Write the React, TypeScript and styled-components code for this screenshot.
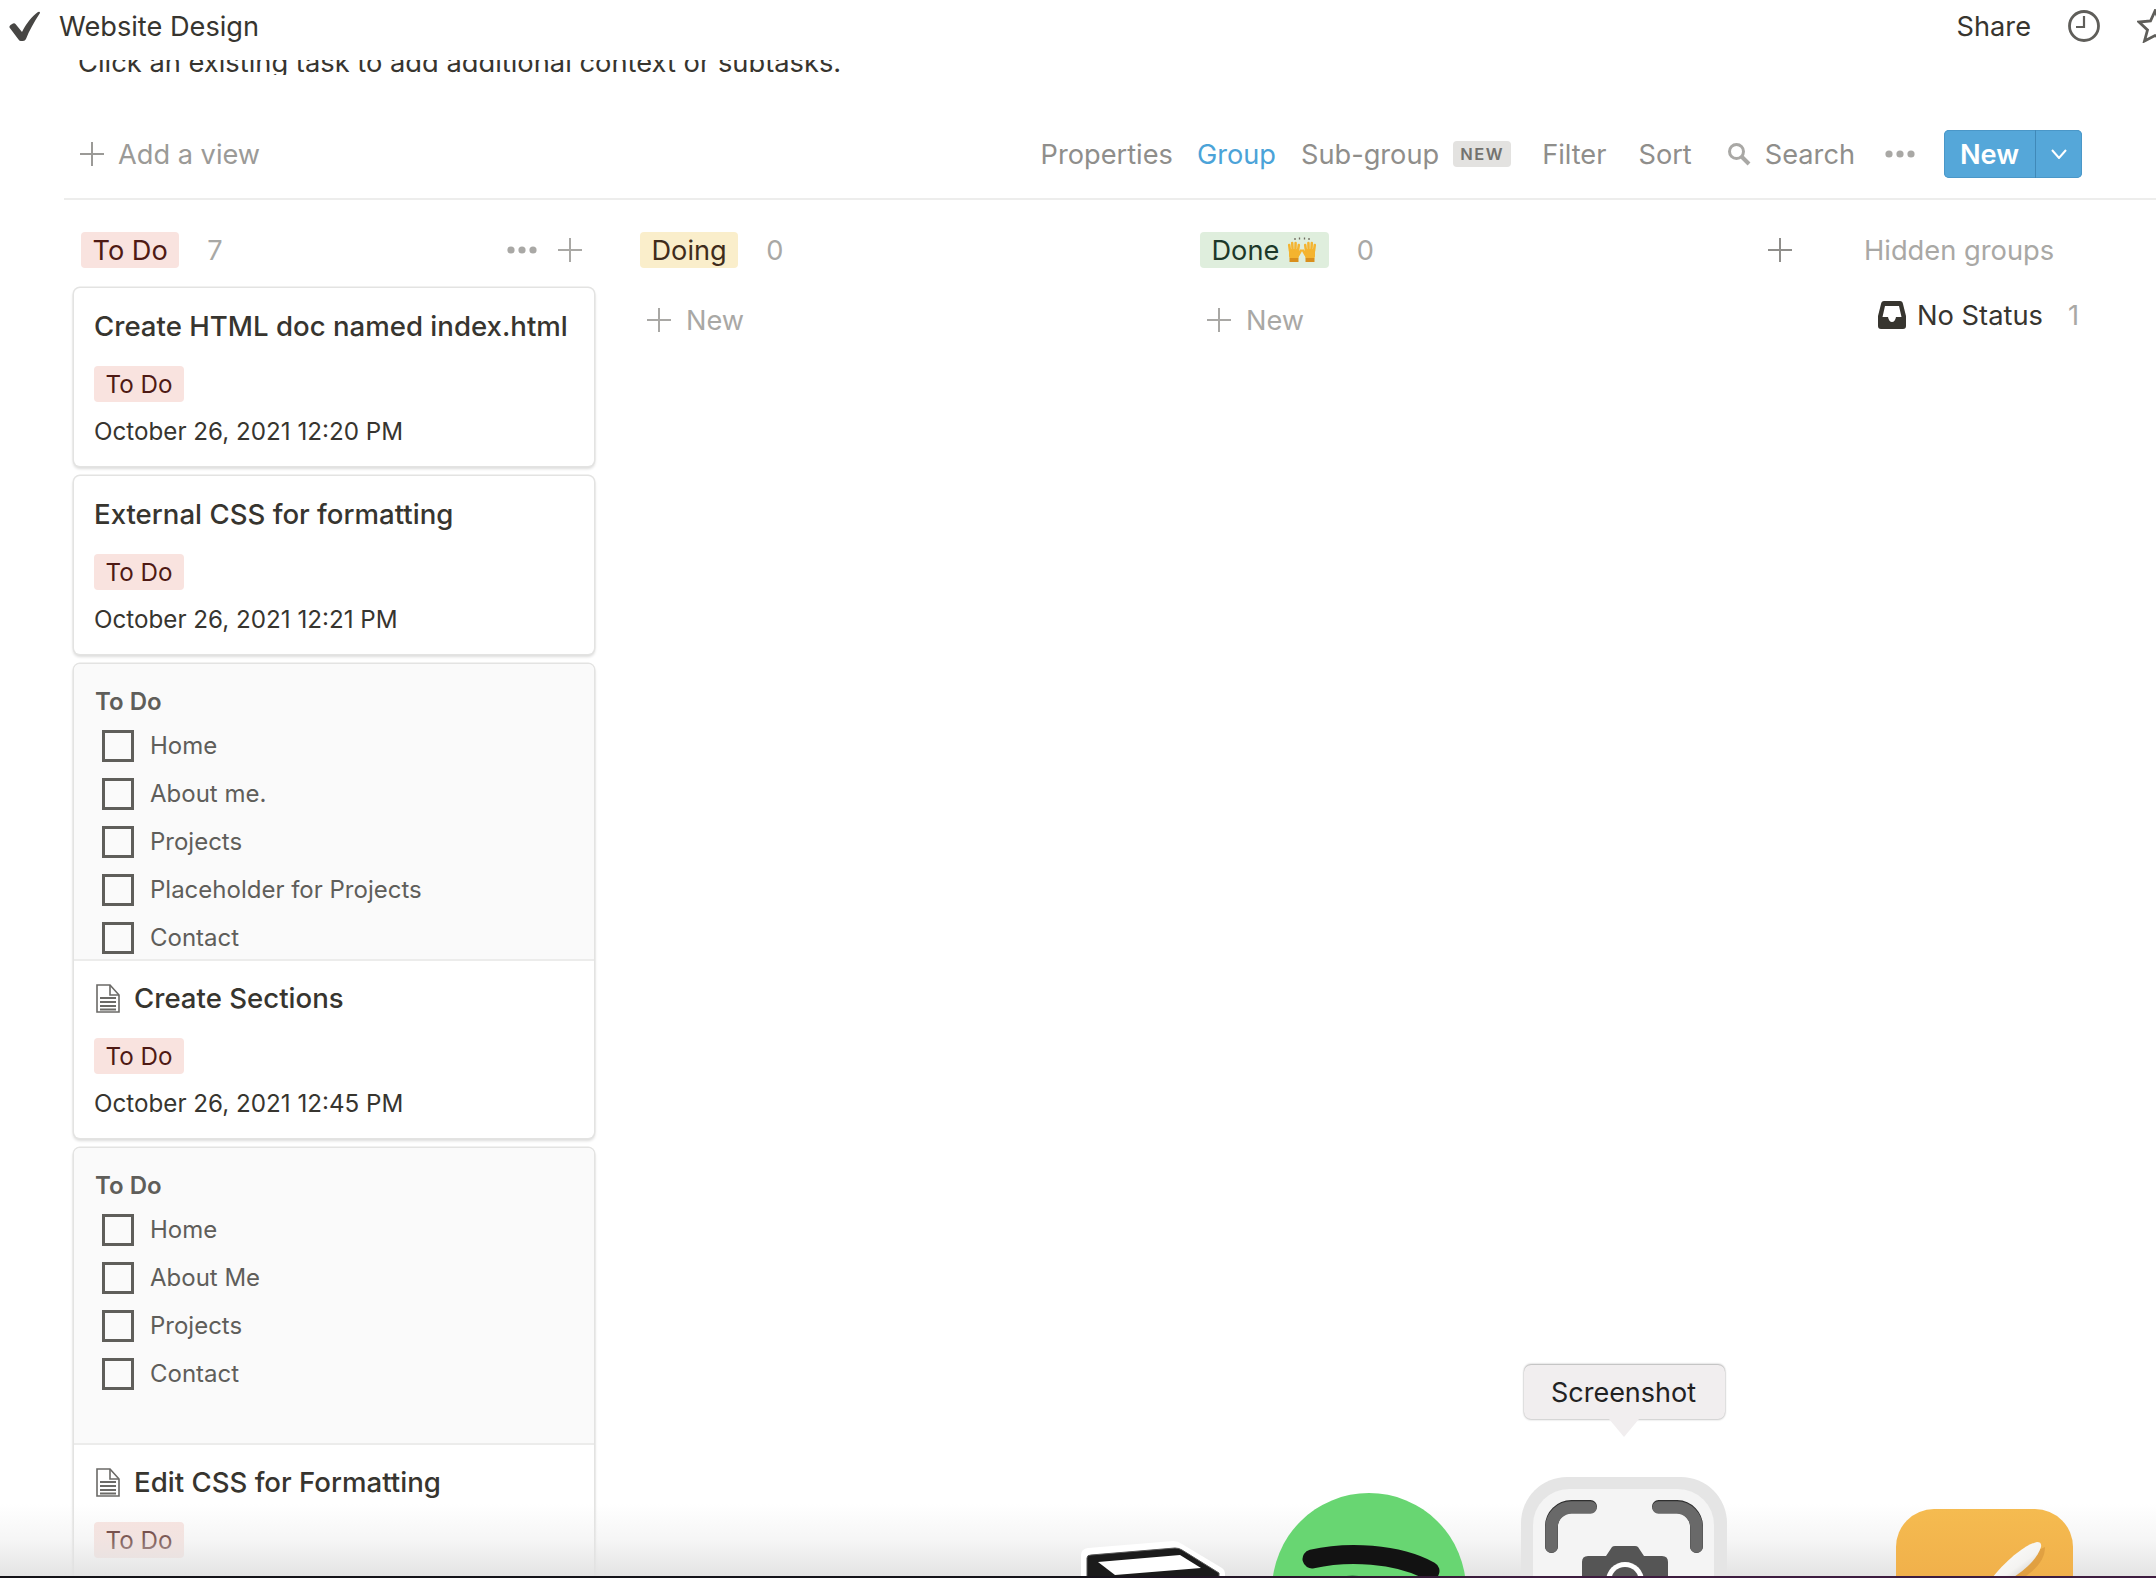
import React from "react";
import styled, { createGlobalStyle } from "styled-components";

const GlobalStyle = createGlobalStyle`
  html, body {
    margin: 0;
    padding: 0;
    background: #fff;
  }
  body {
    font-family: Inter, "Liberation Sans", sans-serif;
    color: #37352f;
  }
`;

const Page = styled.div`
  position: relative;
  width: 2156px;
  height: 1578px;
  overflow: hidden;
  background: #fff;
`;

const TopBar = styled.header`
  height: 60px;
  padding: 0 0 8px 9px;
  box-sizing: border-box;
  display: flex;
  align-items: center;
  gap: 18px;
  font-size: 27.2px;
`;

const PageTitle = styled.span`
  color: #37352f;
`;

const TopActions = styled.div`
  margin-left: auto;
  margin-right: -17px;
  display: flex;
  align-items: center;
  gap: 37px;
`;

const Description = styled.div`
  height: 15px;
  padding-left: 78px;
  display: flex;
  align-items: flex-end;
  overflow: hidden;
  font-size: 27.3px;
  line-height: 32px;
  color: #37352f;
  white-space: nowrap;
  & > span {
    display: block;
    margin-bottom: -4px;
  }
`;

const Toolbar = styled.div`
  margin: 35px 0 0 64px;
  height: 90px;
  padding: 0 74px 0 16px;
  box-sizing: border-box;
  border-bottom: 2px solid #ededec;
  display: flex;
  align-items: center;
  font-size: 27.2px;
  color: #8f8e8b;
`;

const AddView = styled.div`
  display: flex;
  align-items: center;
  gap: 14px;
  margin-right: auto;
  color: #9b9a97;
`;

const ToolItem = styled.span<{ $gap?: number; $active?: boolean }>`
  margin-left: ${(p) => p.$gap ?? 0}px;
  color: ${(p) => (p.$active ? "#4ba3d8" : "#8f8e8b")};
  display: inline-flex;
  align-items: center;
`;

const NewBadge = styled.span`
  margin-left: 14px;
  width: 58px;
  height: 26px;
  border-radius: 4px;
  background: #e3e2e0;
  color: #73726e;
  font-size: 16.5px;
  font-weight: 600;
  letter-spacing: 1.4px;
  display: inline-flex;
  align-items: center;
  justify-content: center;
`;

const NewButton = styled.div`
  margin-left: 29px;
  width: 138px;
  height: 48px;
  border-radius: 5px;
  background: #55a7d9;
  box-shadow: inset 0 0 0 1px #4a97c8;
  color: #fff;
  display: flex;
  align-items: stretch;
`;

const NewLabel = styled.span`
  width: 91px;
  display: flex;
  align-items: center;
  justify-content: center;
  font-weight: 600;
  border-right: 1px solid #4089b8;
`;

const NewArrow = styled.span`
  flex: 1;
  display: flex;
  align-items: center;
  justify-content: center;
`;

const Board = styled.main`
  margin-top: 32px;
  padding-left: 73px;
  display: flex;
  align-items: flex-start;
  gap: 37px;
`;

const Column = styled.section<{ $width: number }>`
  width: ${(p) => p.$width}px;
  flex: none;
`;

const ColumnHeader = styled.div`
  height: 36px;
  padding: 0 13px 0 8px;
  display: flex;
  align-items: center;
  font-size: 27.2px;
`;

const Tag = styled.span<{ $kind: "todo" | "doing" | "done" }>`
  height: 36px;
  padding: 0 11.5px;
  border-radius: 4px;
  display: inline-flex;
  align-items: center;
  gap: 8px;
  white-space: nowrap;
  background: ${(p) =>
    p.$kind === "todo" ? "#f9e3df" : p.$kind === "doing" ? "#faeecb" : "#dfeedd"};
  color: ${(p) =>
    p.$kind === "todo" ? "#4f1a14" : p.$kind === "doing" ? "#402c1b" : "#1c3829"};
`;

const CardTag = styled(Tag)`
  font-size: 24.2px;
`;

const Count = styled.span`
  margin-left: 28px;
  color: #a9a8a5;
`;

const HeaderTools = styled.div`
  margin-left: auto;
  display: flex;
  align-items: center;
  gap: 21px;
`;

const CardList = styled.div`
  margin-top: 20px;
  padding: 0 1px;
  display: flex;
  flex-direction: column;
  gap: 10px;
`;

const Card = styled.article`
  border-radius: 6px;
  background: #fff;
  overflow: hidden;
  box-shadow: 0 0 0 1.5px #e3e3e2, 0 2px 3px 1px #dcdcdb;
`;

const Cover = styled.div`
  height: 297px;
  padding: 21px 0 0 21px;
  box-sizing: border-box;
  background: #fafafa;
  border-bottom: 2px solid #ececeb;
  overflow: hidden;
  color: #5f5e5a;
  font-size: 24px;
`;

const CoverHeading = styled.div`
  line-height: 34px;
  font-weight: 600;
  margin-bottom: 3px;
`;

const TodoRow = styled.div`
  height: 48px;
  padding-left: 7px;
  display: flex;
  align-items: center;
  gap: 16px;
`;

const TodoText = styled.span`
  margin-bottom: 2px;
`;

const Checkbox = styled.span`
  width: 32px;
  height: 32px;
  box-sizing: border-box;
  border: 3px solid #5f5e5a;
`;

const CardBody = styled.div<{ $covered?: boolean }>`
  min-height: 177px;
  box-sizing: border-box;
  padding: ${(p) => (p.$covered ? "19px" : "20px")} 20px 17px;
`;

const CardTitle = styled.div<{ $covered?: boolean }>`
  height: 36px;
  padding-left: ${(p) => (p.$covered ? 2 : 0)}px;
  display: flex;
  align-items: center;
  gap: 14px;
  font-size: 27.6px;
  font-weight: 500;
  white-space: nowrap;
  margin-bottom: 22px;
`;

const CardDate = styled.div`
  margin-top: 13px;
  line-height: 34px;
  font-size: 24.2px;
  color: #37352f;
`;

const NewRow = styled.div`
  margin-top: 34px;
  padding-left: 15px;
  height: 36px;
  display: flex;
  align-items: center;
  gap: 15px;
  font-size: 27.2px;
  color: #a9a8a5;
`;

const HiddenColumn = styled.aside`
  margin-left: 22px;
  font-size: 27.3px;
`;

const HiddenTitle = styled.div`
  height: 36px;
  line-height: 37px;
  color: #a9a8a5;
  white-space: nowrap;
`;

const HiddenRow = styled.div`
  margin-top: 29px;
  height: 36px;
  padding-left: 14px;
  display: flex;
  align-items: center;
  gap: 11px;
  white-space: nowrap;
`;

const HiddenCount = styled.span`
  margin-left: 14px;
  color: #a9a8a5;
`;

const DockLayer = styled.div`
  position: absolute;
  inset: 0;
  pointer-events: none;
`;

const DockFade = styled.div`
  position: absolute;
  left: 0;
  right: 0;
  bottom: 2px;
  height: 72px;
  background: linear-gradient(
    rgba(228, 228, 228, 0),
    rgba(228, 228, 228, 0.35) 50%,
    rgba(226, 226, 226, 0.95)
  );
`;

const DockBar = styled.div`
  position: absolute;
  left: 0;
  right: 0;
  bottom: 0;
  height: 2px;
  background: linear-gradient(90deg, #131217 0, #15131a 50%, #3d1c3f 70%, #3d1c3f 100%);
`;

const DockIcon = styled.svg<{ $left: number; $top: number }>`
  position: absolute;
  left: ${(p) => p.$left}px;
  top: ${(p) => p.$top}px;
`;

const Tooltip = styled.div`
  position: absolute;
  left: 1524px;
  top: 1365px;
  width: 201px;
  height: 54px;
  padding-right: 2px;
  box-sizing: border-box;
  border-radius: 7px;
  background: #f1eeef;
  box-shadow: 0 -1px 2px rgba(0, 0, 0, 0.3), 0 1px 2px rgba(0, 0, 0, 0.2);
  color: #222;
  font-size: 27px;
  display: flex;
  align-items: center;
  justify-content: center;
  &::after {
    content: "";
    position: absolute;
    left: 85px;
    top: 54px;
    border-left: 15px solid transparent;
    border-right: 15px solid transparent;
    border-top: 18px solid #f1eeef;
  }
`;

const PlusIcon = ({ color = "#a9a8a5" }: { color?: string }) => (
  <svg width="24" height="24" viewBox="0 0 24 24">
    <path d="M12 0V24M0 12H24" stroke={color} strokeWidth="2" fill="none" />
  </svg>
);

const DotsIcon = ({ color = "#a9a8a5" }: { color?: string }) => (
  <svg width="30" height="8" viewBox="0 0 30 8">
    <circle cx="4" cy="4" r="3.6" fill={color} />
    <circle cx="15" cy="4" r="3.6" fill={color} />
    <circle cx="26" cy="4" r="3.6" fill={color} />
  </svg>
);

const DocIcon = () => (
  <svg width="24" height="29" viewBox="0 0 24 29" fill="none" stroke="#6b6a67">
    <path d="M1 1H14L23 11V28H1Z" strokeWidth="1.6" />
    <path d="M14 1V11H23" strokeWidth="1.6" />
    <path d="M4 14H20M4 18H20M4 22H20M4 25.5H20" strokeWidth="1.8" />
  </svg>
);

const Hand = () => (
  <>
    <rect x="2" y="12" width="10" height="10" rx="3" fill="#f4b42f" />
    <path
      d="M3 14L2.2 8M5.6 13L5.2 6M8.4 13L8.6 6M11 14L11.8 8M11.5 18L14 13.5"
      stroke="#f4b42f"
      strokeWidth="2.5"
      strokeLinecap="round"
      fill="none"
    />
    <rect x="2.5" y="21" width="9" height="4" fill="#d98f1c" />
  </>
);

const RaisedHands = () => (
  <svg width="30" height="26" viewBox="0 0 30 26">
    <Hand />
    <g transform="translate(30 0) scale(-1 1)">
      <Hand />
    </g>
    <path d="M8 3V1M12.5 2.6V0.4M17.5 2.6V0.4M22 3V1" stroke="#6f6a5e" strokeWidth="1.3" />
  </svg>
);

const SearchIcon = () => (
  <svg width="24" height="24" viewBox="0 0 24 24" fill="none" stroke="#a9a8a5">
    <circle cx="9.5" cy="9.5" r="7" strokeWidth="3" />
    <path d="M14.5 14.5L22 22" strokeWidth="4" />
  </svg>
);

const InboxIcon = () => (
  <svg width="28" height="28" viewBox="0 0 28 28">
    <path
      d="M6 0H22Q24.5 0 25 3L28 15V25Q28 28 25 28H3Q0 28 0 25V15L3 3Q3.5 0 6 0ZM7 5L4.5 16H10Q11 21 14 21Q17 21 18 16H23.5L21 5Z"
      fill="#37352f"
      fillRule="evenodd"
    />
  </svg>
);

const columnsCards = [
  { title: "Create HTML doc named index.html", date: "October 26, 2021 12:20 PM" },
  { title: "External CSS for formatting", date: "October 26, 2021 12:21 PM" },
  {
    title: "Create Sections",
    date: "October 26, 2021 12:45 PM",
    todos: ["Home", "About me.", "Projects", "Placeholder for Projects", "Contact"],
  },
  {
    title: "Edit CSS for Formatting",
    todos: ["Home", "About Me", "Projects", "Contact"],
  },
];

const App = () => (
  <Page>
    <GlobalStyle />
    <TopBar>
      <svg width="32" height="32" viewBox="0 0 32 32">
        <path
          d="M0.5 17.5Q0 16 1.5 15L4 13.5Q5.5 12.8 6.5 14L13 22C17 14 23 6 29 2Q31 1 31 3C25 12 20 21 17 29Q16 31 14 31H12Q10.5 31 9.5 29.5Z"
          fill="#474644"
        />
      </svg>
      <PageTitle>Website Design</PageTitle>
      <TopActions>
        <span>Share</span>
        <svg width="32" height="32" viewBox="0 0 32 32" fill="none" stroke="#5f5e5a">
          <circle cx="16" cy="16" r="14.5" strokeWidth="2.8" />
          <path d="M16 6V17H8" strokeWidth="2.2" />
        </svg>
        <svg width="36" height="34" viewBox="0 0 36 34" fill="none" stroke="#5f5e5a">
          <path
            d="M18 2L22.5 12L34 13L25.5 21L28.5 32L18 26.5L7.5 32L10.5 21L2 13L13.5 12Z"
            strokeWidth="2.8"
          />
        </svg>
      </TopActions>
    </TopBar>
    <Description>
      <span>Click an existing task to add additional context or subtasks.</span>
    </Description>
    <Toolbar>
      <AddView>
        <PlusIcon color="#9b9a97" />
        Add a view
      </AddView>
      <ToolItem>Properties</ToolItem>
      <ToolItem $gap={24} $active>
        Group
      </ToolItem>
      <ToolItem $gap={25}>Sub-group</ToolItem>
      <NewBadge>NEW</NewBadge>
      <ToolItem $gap={31}>Filter</ToolItem>
      <ToolItem $gap={32}>Sort</ToolItem>
      <ToolItem $gap={35}>
        <SearchIcon />
      </ToolItem>
      <ToolItem $gap={14}>Search</ToolItem>
      <ToolItem $gap={30}>
        <DotsIcon />
      </ToolItem>
      <NewButton>
        <NewLabel>New</NewLabel>
        <NewArrow>
          <svg width="16" height="10" viewBox="0 0 16 10" fill="none" stroke="#fff">
            <path d="M1 1L8 9L15 1" strokeWidth="2" />
          </svg>
        </NewArrow>
      </NewButton>
    </Toolbar>
    <Board>
      <Column $width={522}>
        <ColumnHeader>
          <Tag $kind="todo">To Do</Tag>
          <Count>7</Count>
          <HeaderTools>
            <DotsIcon />
            <PlusIcon />
          </HeaderTools>
        </ColumnHeader>
        <CardList>
          {columnsCards.map((card) => (
            <Card key={card.title}>
              {card.todos && (
                <Cover>
                  <CoverHeading>To Do</CoverHeading>
                  {card.todos.map((todo) => (
                    <TodoRow key={todo}>
                      <Checkbox />
                      <TodoText>{todo}</TodoText>
                    </TodoRow>
                  ))}
                </Cover>
              )}
              <CardBody $covered={!!card.todos}>
                <CardTitle $covered={!!card.todos}>
                  {card.todos && <DocIcon />}
                  {card.title}
                </CardTitle>
                <CardTag $kind="todo">To Do</CardTag>
                {card.date && <CardDate>{card.date}</CardDate>}
              </CardBody>
            </Card>
          ))}
        </CardList>
      </Column>
      <Column $width={523}>
        <ColumnHeader>
          <Tag $kind="doing">Doing</Tag>
          <Count>0</Count>
        </ColumnHeader>
        <NewRow>
          <PlusIcon />
          New
        </NewRow>
      </Column>
      <Column $width={613}>
        <ColumnHeader>
          <Tag $kind="done">
            Done
            <RaisedHands />
          </Tag>
          <Count>0</Count>
          <HeaderTools>
            <PlusIcon color="#8f8e8b" />
          </HeaderTools>
        </ColumnHeader>
        <NewRow>
          <PlusIcon />
          New
        </NewRow>
      </Column>
      <HiddenColumn>
        <HiddenTitle>Hidden groups</HiddenTitle>
        <HiddenRow>
          <InboxIcon />
          No Status
          <HiddenCount>1</HiddenCount>
        </HiddenRow>
      </HiddenColumn>
    </Board>
    <DockLayer>
      <DockFade />
      <DockIcon $left={1081} $top={1541} width="145" height="37" viewBox="0 0 145 37">
        <path d="M0 37V14Q0 8 7 7L92 0Q97 0 101 3L141 27Q144 29 144 33V37Z" fill="#fff" />
        <path d="M6 37V17Q6 14 10 14L94 7Q98 7 101 9L138 32V37Z" fill="#1b1b1b" stroke="#555" strokeWidth="1" />
        <path d="M17 21L99 14L120 27L34 34Z" fill="#fff" />
      </DockIcon>
      <DockIcon $left={1272} $top={1493} width="194" height="85" viewBox="0 0 194 85">
        <circle cx="97" cy="97" r="97" fill="#68d672" />
        <path d="M40 66C75 58 125 60 158 78" fill="none" stroke="#121212" strokeWidth="19" strokeLinecap="round" />
        <path d="M62 85Q80 80 100 85Z" fill="#2c7a3a" />
      </DockIcon>
      <DockIcon $left={1520} $top={1477} width="207" height="101" viewBox="0 0 207 101">
        <rect x="1" width="206" height="200" rx="46" fill="#e5e5e5" />
        <rect x="13" y="12" width="181" height="190" rx="36" fill="#f4f4f4" />
        <path
          d="M70.5 29.5H52A20 20 0 0 0 31.5 50V69.5M138.5 29.5H157A20 20 0 0 1 176.5 50V69.5"
          fill="none"
          stroke="#2f2f2f"
          strokeWidth="13"
          strokeLinecap="round"
        />
        <path
          d="M70.5 30.5H52A20 20 0 0 0 31.5 50V69.5M138.5 30.5H157A20 20 0 0 1 176.5 50V69.5"
          fill="none"
          stroke="#696969"
          strokeWidth="12.5"
          strokeLinecap="round"
        />
        <path d="M86 79L92 70Q93 69 95 69H115Q117 69 118 70L124 79H142Q148 79 148 85V101H62V85Q62 79 68 79Z" fill="#555" />
        <circle cx="105" cy="104" r="19" fill="#fff" />
        <circle cx="105" cy="104" r="14" fill="#555" />
      </DockIcon>
      <DockIcon $left={1895} $top={1509} width="178" height="69" viewBox="0 0 178 69">
        <defs>
          <linearGradient id="notesOrange" x1="0" y1="0" x2="0" y2="1">
            <stop offset="0" stopColor="#f5bb50" />
            <stop offset="1" stopColor="#eca545" />
          </linearGradient>
          <linearGradient id="notesPen" x1="0" y1="0" x2="1" y2="1">
            <stop offset="0" stopColor="#ffffff" />
            <stop offset="0.6" stopColor="#f4f3f1" />
            <stop offset="1" stopColor="#b9b6b0" />
          </linearGradient>
        </defs>
        <rect x="1" width="177" height="140" rx="38" fill="url(#notesOrange)" />
        <path d="M105 69C120 58 135 44 150 38C150 50 142 60 128 69Z" fill="#c98433" opacity="0.4" />
        <path d="M97 69C106 58 114 50 122 44C130 38 137 34 142 33Q147 33 146 38C143 47 135 58 117 69Z" fill="url(#notesPen)" />
      </DockIcon>
      <Tooltip>Screenshot</Tooltip>
      <DockBar />
    </DockLayer>
  </Page>
);

export default App;
